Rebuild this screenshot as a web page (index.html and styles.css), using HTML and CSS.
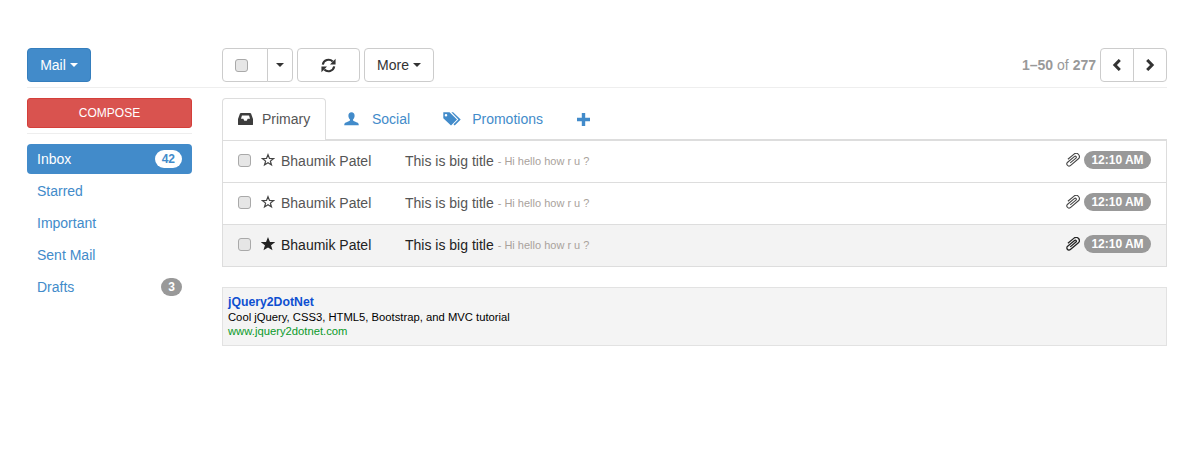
FILE: index.html
```html
<!DOCTYPE html>
<html lang="en">
<head>
  <meta charset="UTF-8" />
  <title>Mail</title>
  <link rel="stylesheet" href="styles.css">
</head>
<body>
  <div class="container">
    <div class="toprow">
      <div class="side">
        <button class="btn btn-blue">Mail <span class="caret"></span></button>
      </div>
      <div class="main toolbar">
        <div class="btn-group">
          <button class="btn btn-check"><input type="checkbox" class="check"></button>
          <button class="btn btn-drop"><span class="caret dark"></span></button>
        </div>
        <button class="btn btn-refresh">
          <svg class="icon" width="15" height="15" viewBox="0 0 14 14">
            <g><path fill="none" stroke="#333" stroke-width="2" d="M1.700 6.200A5.400 5.400 0 0 1 10.900 3.300"/><path fill="#333" d="M13.600.8V6H8.400z"/></g>
            <g transform="rotate(180 7 7)"><path fill="none" stroke="#333" stroke-width="2" d="M1.700 6.200A5.400 5.400 0 0 1 10.900 3.300"/><path fill="#333" d="M13.600.8V6H8.400z"/></g>
          </svg>
        </button>
        <button class="btn btn-more">More <span class="caret dark"></span></button>
        <div class="pager">
          <span class="pager-text"><strong>1–50</strong> of <strong>277</strong></span>
          <div class="btn-group">
            <button class="btn btn-page">
              <svg class="icon" width="10" height="12" viewBox="0 0 10 12"><path fill="none" stroke="#333" stroke-width="3" d="M7.800 1 2.900 6l4.900 5"/></svg>
            </button>
            <button class="btn btn-page">
              <svg class="icon" width="10" height="12" viewBox="0 0 10 12"><path fill="none" stroke="#333" stroke-width="3" d="M2.200 1 7.100 6l-4.900 5"/></svg>
            </button>
          </div>
        </div>
      </div>
    </div>
    <hr class="rule">
    <div class="columns">
      <div class="side">
        <a class="compose">COMPOSE</a>
        <hr class="rule side-rule">
        <ul class="folders">
          <li class="active"><a>Inbox</a><span class="badge">42</span></li>
          <li><a>Starred</a></li>
          <li><a>Important</a></li>
          <li><a>Sent Mail</a></li>
          <li><a>Drafts</a><span class="badge">3</span></li>
        </ul>
      </div>
      <div class="main">
        <ul class="tabs">
          <li class="tab tab-on">
            <svg class="tab-icon" width="15" height="14" viewBox="0 0 16 14"><path fill="#3d3d3d" d="M3.200 .5h9.600c.5 0 .9.300 1.100.7L16 7v5.500c0 .6-.5 1-1 1H1c-.5 0-1-.4-1-1V7l2.100-5.800c.2-.4.600-.7 1.100-.7zM4.200 3.200 3.200 6.800h2.500l1 2h2.600l1-2h2.500l-1-3.600z"/></svg>
            Primary
          </li>
          <li class="tab tab-social">
            <svg class="tab-icon" width="15" height="14" viewBox="0 0 15 14"><path fill="#428bca" d="M7.500 .3c2 0 3.100 1.500 3.100 3.400 0 1.500-.6 2.800-1.500 3.600v1.100c0 .5 3.200 1.300 4.700 2.400.7.500 1 1.300 1 2.400H.2c0-1.100.3-1.900 1-2.400 1.500-1.100 4.700-1.900 4.700-2.400V7.300C5 6.500 4.400 5.200 4.400 3.700 4.400 1.800 5.500.3 7.500.3z"/></svg>
            Social
          </li>
          <li class="tab tab-promo">
            <svg class="tab-icon" width="18" height="14" viewBox="0 0 18 14"><path fill="#428bca" d="M.3 .3h6.200l7.500 7.200-6 6L.3 6.300zM3 2a1.300 1.300 0 1 0 0 2.600A1.300 1.300 0 0 0 3 2z"/><path fill="#428bca" d="M8.400 .3h1.700l7.600 7.200-6 6-1.200-1.200 4.900-4.800z"/></svg>
            Promotions
          </li>
          <li class="tab tab-plus">
            <svg width="13" height="13" viewBox="0 0 13 13"><path fill="#428bca" d="M4.800 0h3.400v4.800H13v3.400H8.200V13H4.800V8.200H0V4.800h4.800z"/></svg>
          </li>
        </ul>
        <div class="mails">
          <div class="mail">
            <input type="checkbox" class="check">
            <svg class="star" width="14" height="14" viewBox="0 0 14 14"><path fill="none" stroke="#444" stroke-width="1.200" d="M7 1.700 8.500 5.500l4 .1-3.100 2.500 1.100 3.900L7 9.800l-3.500 2.200 1.100-3.900-3.100-2.500 4-.1z"/></svg>
            <span class="name">Bhaumik Patel</span>
            <span class="subject">This is big title</span>
            <span class="preview">- Hi hello how r u ?</span>
            <svg class="clip" width="16" height="14" viewBox=".5 .5 15 13"><path transform="translate(.5 4) rotate(-40 7.500 3)" fill="none" stroke="#444" stroke-width="1" d="M4.500 4H11.500a1 1 0 0 0 0-2H3a2 2 0 0 0 0 4H12.500a3 3 0 0 0 0-6H5"/></svg>
            <span class="badge time">12:10 AM</span>
          </div>
          <div class="mail">
            <input type="checkbox" class="check">
            <svg class="star" width="14" height="14" viewBox="0 0 14 14"><path fill="none" stroke="#444" stroke-width="1.200" d="M7 1.700 8.500 5.500l4 .1-3.100 2.500 1.100 3.900L7 9.800l-3.500 2.200 1.100-3.900-3.100-2.500 4-.1z"/></svg>
            <span class="name">Bhaumik Patel</span>
            <span class="subject">This is big title</span>
            <span class="preview">- Hi hello how r u ?</span>
            <svg class="clip" width="16" height="14" viewBox=".5 .5 15 13"><path transform="translate(.5 4) rotate(-40 7.500 3)" fill="none" stroke="#444" stroke-width="1" d="M4.500 4H11.500a1 1 0 0 0 0-2H3a2 2 0 0 0 0 4H12.500a3 3 0 0 0 0-6H5"/></svg>
            <span class="badge time">12:10 AM</span>
          </div>
          <div class="mail mail-read">
            <input type="checkbox" class="check">
            <svg class="star" width="14" height="14" viewBox="0 0 14 14"><path fill="#222" stroke="#222" stroke-width="1.200" d="M7 1.700 8.500 5.500l4 .1-3.100 2.500 1.100 3.900L7 9.800l-3.500 2.200 1.100-3.900-3.100-2.500 4-.1z"/></svg>
            <span class="name">Bhaumik Patel</span>
            <span class="subject">This is big title</span>
            <span class="preview">- Hi hello how r u ?</span>
            <svg class="clip" width="16" height="14" viewBox=".5 .5 15 13"><path transform="translate(.5 4) rotate(-40 7.500 3)" fill="none" stroke="#222" stroke-width="1.200" d="M4.500 4H11.500a1 1 0 0 0 0-2H3a2 2 0 0 0 0 4H12.500a3 3 0 0 0 0-6H5"/></svg>
            <span class="badge time">12:10 AM</span>
          </div>
        </div>
        <div class="promo">
          <a class="promo-title">jQuery2DotNet</a>
          <div class="promo-text">Cool jQuery, CSS3, HTML5, Bootstrap, and MVC tutorial</div>
          <a class="promo-url">www.jquery2dotnet.com</a>
        </div>
      </div>
    </div>
  </div>
</body>
</html>
```

FILE: styles.css
```css
* {
  box-sizing: border-box;
}

body {
  margin: 0;
  font-family: "Liberation Sans", Arial, sans-serif;
  font-size: 14px;
  line-height: 20px;
  color: #333;
  background-color: #fff;
}

.container {
  width: 1140px;
  margin-left: 27px;
  padding-top: 48px;
}

.toprow, .columns {
  display: flex;
  gap: 30px;
}

.side {
  width: 165px;
  flex-shrink: 0;
}

.main {
  width: 945px;
}

.toolbar {
  display: flex;
  align-items: center;
}

.btn {
  height: 34px;
  padding: 6px 12px;
  font-family: inherit;
  font-size: 14px;
  line-height: 20px;
  color: #333;
  background-color: #fff;
  border: 1px solid #ccc;
  border-radius: 4px;
  display: inline-flex;
  align-items: center;
  justify-content: center;
}

.btn-blue {
  width: 64px;
  color: #fff;
  background-color: #428bca;
  border-color: #357ebd;
}

.btn-group {
  display: flex;
}

.btn-check {
  width: 46px;
  justify-content: flex-start;
  border-radius: 4px 0 0 4px;
}

.btn-drop {
  width: 26px;
  margin-left: -1px;
  padding: 0;
  border-radius: 0 4px 4px 0;
}

.btn-refresh {
  width: 63px;
  margin-left: 4px;
  padding: 0;
}

.btn-more {
  width: 70px;
  margin-left: 4px;
  padding: 6px 0;
}

.caret {
  display: inline-block;
  width: 0;
  height: 0;
  margin-left: 4px;
  border-top: 4px solid #fff;
  border-left: 4px solid transparent;
  border-right: 4px solid transparent;
}

.caret.dark {
  border-top-color: #333;
}

.btn-drop .caret {
  margin-left: 0;
}

.check {
  appearance: none;
  width: 13px;
  height: 13px;
  margin: 0;
  flex-shrink: 0;
  background-color: #e6e6e6;
  border: 1px solid #a9a9a9;
  border-radius: 3px;
}

.pager {
  margin-left: auto;
  display: flex;
  align-items: center;
  gap: 4px;
}

.pager-text {
  color: #999;
}

.btn-page {
  width: 34px;
  padding: 0;
  border-radius: 4px 0 0 4px;
}

.btn-page + .btn-page {
  margin-left: -1px;
  border-radius: 0 4px 4px 0;
}

.rule {
  height: 1px;
  margin: 5px 0 10px;
  border: 0;
  background-color: #eee;
}

.compose {
  display: block;
  height: 30px;
  font-size: 12px;
  line-height: 28px;
  text-align: center;
  color: #fff;
  background-color: #d9534f;
  border: 1px solid #d43f3a;
  border-radius: 3px;
}

.side-rule {
  margin: 5px 0 10px;
}

.folders {
  list-style: none;
  margin: 0;
  padding: 0;
}

.folders li {
  height: 30px;
  margin-bottom: 2px;
  padding: 0 10px;
  display: flex;
  align-items: center;
  justify-content: space-between;
  color: #428bca;
  border-radius: 4px;
}

.folders li.active {
  color: #fff;
  background-color: #428bca;
}

.badge {
  min-width: 10px;
  padding: 3px 7px;
  font-size: 12px;
  font-weight: bold;
  line-height: 12px;
  color: #fff;
  text-align: center;
  background-color: #999;
  border-radius: 10px;
}

.folders li.active .badge {
  color: #428bca;
  background-color: #fff;
}

.tabs {
  list-style: none;
  margin: 0;
  padding: 0;
  height: 43px;
  display: flex;
  border-bottom: 2px solid #ddd;
}

.tab {
  height: 42px;
  display: flex;
  align-items: center;
  color: #428bca;
}

.tab-on {
  width: 104px;
  padding-left: 15px;
  padding-bottom: 2px;
  color: #555;
  background-color: #fff;
  border: 1px solid #ddd;
  border-bottom: 0;
  border-radius: 4px 4px 0 0;
  gap: 9px;
}

.tab-social {
  margin-left: 18px;
  gap: 13px;
}

.tab-promo {
  margin-left: 33px;
  gap: 11px;
}

.tab-plus {
  margin-left: 34px;
}

.mails {
  border-left: 1px solid #ddd;
  border-right: 1px solid #ddd;
}

.mail {
  height: 42px;
  padding: 0 15px 1px;
  display: flex;
  align-items: center;
  color: #555;
  border-bottom: 1px solid #ddd;
}

.mail-read {
  color: #222;
  background-color: #f3f3f3;
}

.mail .check, .mail .star, .mail .clip, .mail .time {
  margin-bottom: 2px;
}

.star {
  margin-left: 10px;
  flex-shrink: 0;
}

.name {
  width: 124px;
  margin-left: 6px;
}

.subject {
  margin-right: 4px;
}

.preview {
  font-size: 11px;
  color: #a9a29c;
}

.clip {
  margin-left: auto;
}

.time {
  margin-left: 4px;
  width: 67px;
  padding: 3px 0;
}

.promo {
  height: 59px;
  margin-top: 20px;
  padding: 6px 5px 0;
  color: #000;
  background-color: #f4f4f4;
  border: 1px solid #e2e2e2;
}

.promo-title {
  display: block;
  font-size: 12.25px;
  font-weight: bold;
  line-height: 17px;
  color: #0e4fd1;
}

.promo-text {
  font-size: 11.25px;
  line-height: 13px;
}

.promo-url {
  display: block;
  font-size: 11.25px;
  line-height: 15px;
  color: #0a9a2a;
}
```
